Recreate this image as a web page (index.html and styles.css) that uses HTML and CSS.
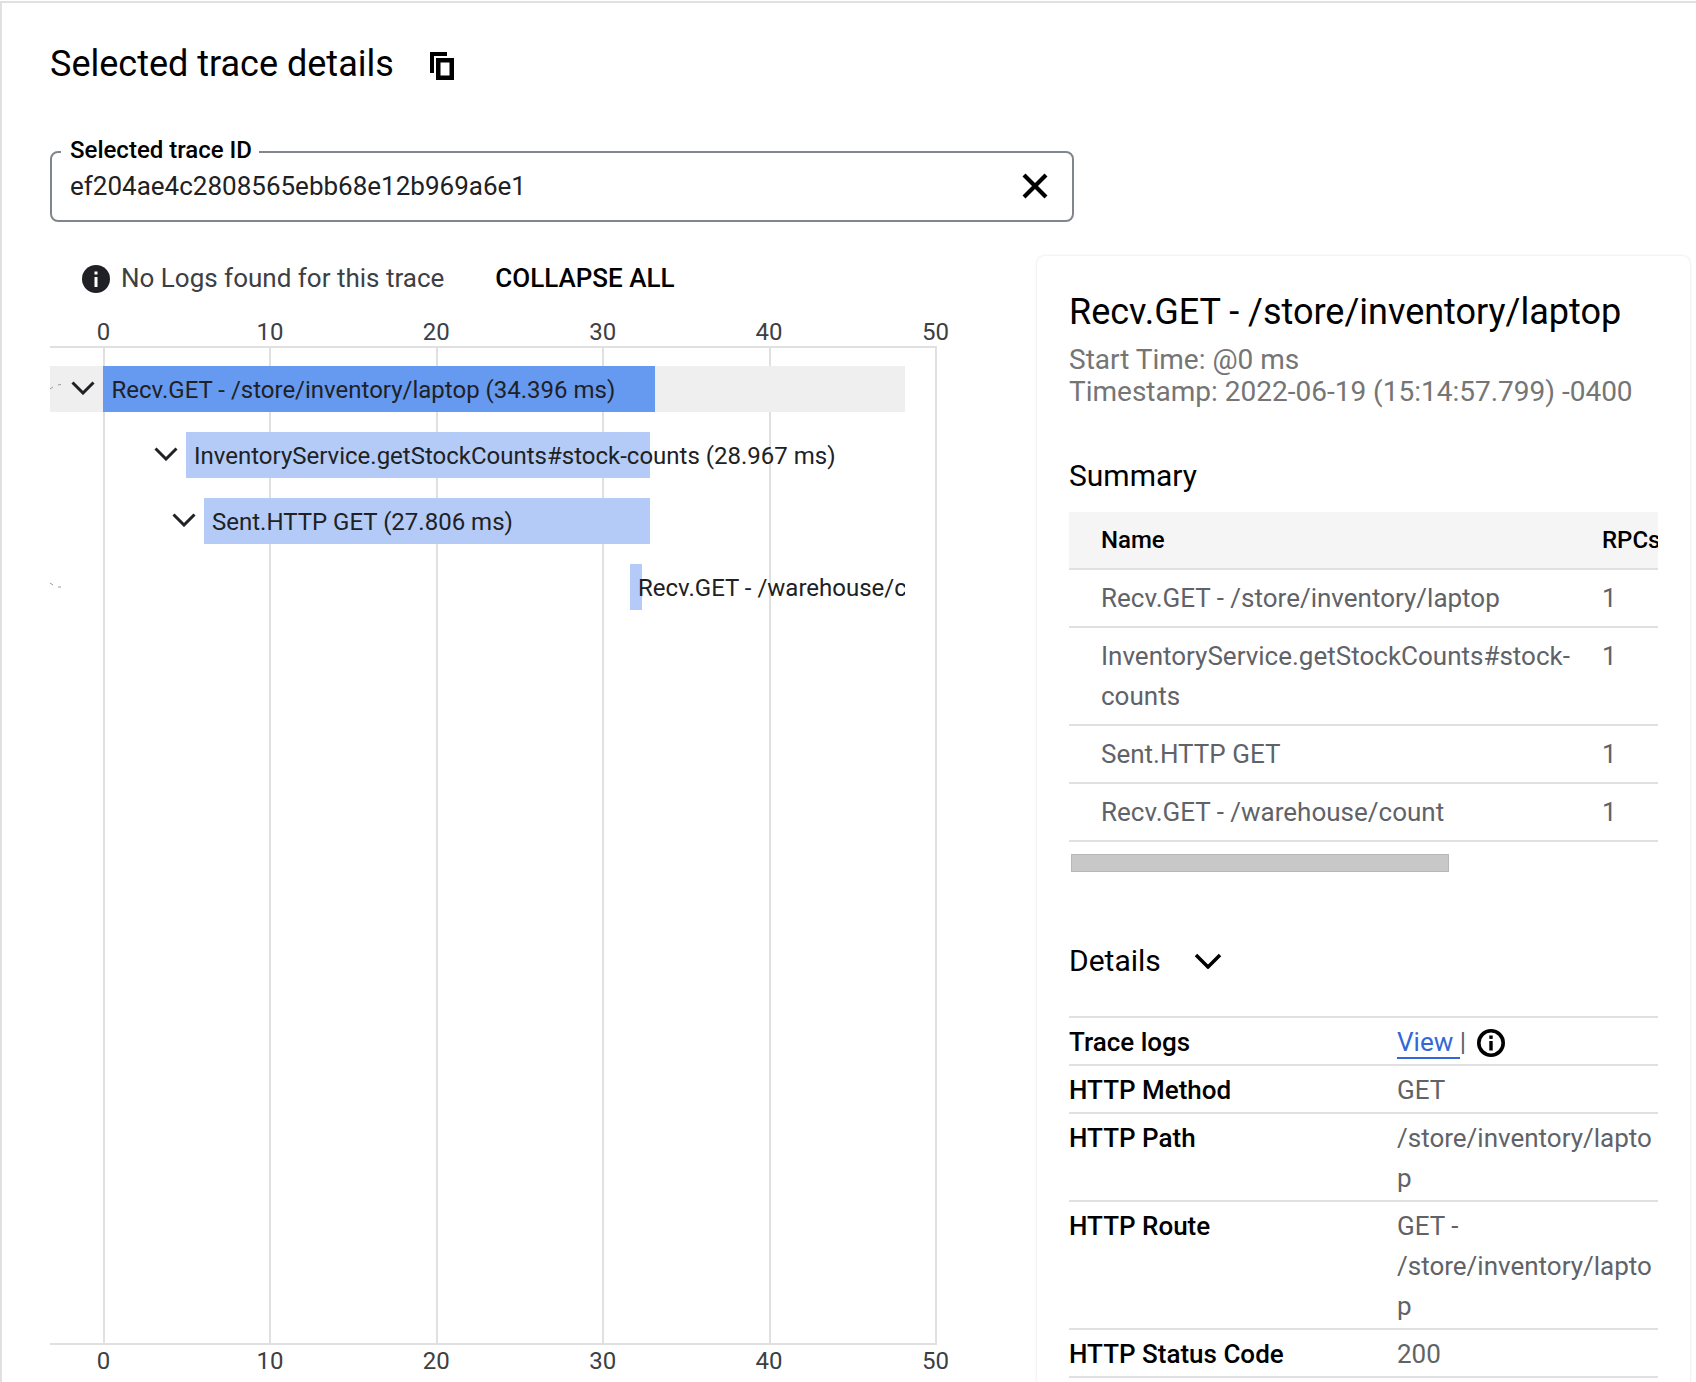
FILE: index.html
```html
<!DOCTYPE html>
<html lang="en">
<head>
    <meta charset="UTF-8">
    <title>Selected trace details</title>
    <link rel="stylesheet" href="styles.css">
</head>
<body>
    <div class="page">
        <div class="heading">
            <h2>Selected trace details</h2>
            <svg class="copy-icon" viewBox="0 0 24 28"><path d="M0 0h17v4H4v17H0z" fill="#000"/><path d="M6 6h18v22H6zM10.500 10.500v13h9v-13z" fill="#000" fill-rule="evenodd"/></svg>
        </div>

        <div class="trace-field">
            <span class="trace-label">Selected trace ID</span>
            <span class="trace-value">ef204ae4c2808565ebb68e12b969a6e1</span>
            <svg class="clear-icon" viewBox="0 0 26 26"><path d="M2 2l22 22M24 2L2 24" stroke="#000" stroke-width="4.200" fill="none"/></svg>
        </div>

        <div class="content">
            <div class="chart-side">
                <div class="toolbar">
                    <svg class="info-icon" viewBox="0 0 28 28"><circle cx="14" cy="14" r="14" fill="#202124"/><rect x="12.500" y="12" width="3" height="10" fill="#fff"/><rect x="12.500" y="6.500" width="3" height="3" fill="#fff"/></svg>
                    <span class="no-logs">No Logs found for this trace</span>
                    <span class="collapse-all">COLLAPSE ALL</span>
                </div>

                <div class="axis axis-top">
                    <span>0</span><span>10</span><span>20</span><span>30</span><span>40</span><span>50</span>
                </div>

                <div class="plot">
                    <div class="grid">
                        <i></i><i></i><i></i><i></i><i></i><i></i>
                    </div>
                    <div class="span-row selected">
                        <svg class="speck" viewBox="0 0 12 6"><path d="M0 5l3-2M8 1l3-.5" stroke="#999" stroke-width="1" fill="none"/></svg>
                        <div class="bar bar-root" style="left:53px;width:552px"></div>
                        <svg class="chevron" style="left:21px" viewBox="0 0 24 14"><path d="M1.500 1.500L12 12 22.500 1.500" /></svg>
                        <span class="span-label" style="left:61.500px">Recv.GET - /store/inventory/laptop (34.396 ms)</span>
                    </div>
                    <div class="span-row">
                        <div class="bar" style="left:136px;width:464px"></div>
                        <svg class="chevron" style="left:104px" viewBox="0 0 24 14"><path d="M1.500 1.500L12 12 22.500 1.500" /></svg>
                        <span class="span-label" style="left:144px">InventoryService.getStockCounts#stock-counts (28.967 ms)</span>
                    </div>
                    <div class="span-row">
                        <div class="bar" style="left:154px;width:446px"></div>
                        <svg class="chevron" style="left:122px" viewBox="0 0 24 14"><path d="M1.500 1.500L12 12 22.500 1.500" /></svg>
                        <span class="span-label" style="left:162px">Sent.HTTP GET (27.806 ms)</span>
                    </div>
                    <div class="span-row">
                        <svg class="speck" viewBox="0 0 12 6"><path d="M0 1l3 2M8 5h3" stroke="#999" stroke-width="1" fill="none"/></svg>
                        <div class="bar" style="left:580px;width:12px"></div>
                        <span class="span-label" style="left:588px">Recv.GET - /warehouse/count</span>
                    </div>
                </div>

                <div class="axis axis-bottom">
                    <span>0</span><span>10</span><span>20</span><span>30</span><span>40</span><span>50</span>
                </div>
            </div>

            <div class="card">
                <h3 class="span-title">Recv.GET - /store/inventory/laptop</h3>
                <p class="span-meta">Start Time: @0 ms<br>Timestamp: 2022-06-19 (15:14:57.799) -0400</p>

                <h4 class="summary-title">Summary</h4>
                <div class="summary-wrap">
                    <table class="summary">
                        <tr><th class="col-name">Name</th><th>RPCs</th></tr>
                        <tr><td class="col-name">Recv.GET - /store/inventory/laptop</td><td>1</td></tr>
                        <tr><td class="col-name">InventoryService.getStockCounts#stock-counts</td><td>1</td></tr>
                        <tr><td class="col-name">Sent.HTTP GET</td><td>1</td></tr>
                        <tr><td class="col-name">Recv.GET - /warehouse/count</td><td>1</td></tr>
                    </table>
                </div>
                <div class="scrollbar"></div>

                <div class="details-head">
                    <h4>Details</h4>
                    <svg class="details-chevron" viewBox="0 0 28 16"><path d="M2 2l12 12L26 2"/></svg>
                </div>

                <table class="details">
                    <tr>
                        <th>Trace logs</th>
                        <td><a class="view-link" href="#">View </a><span class="pipe">|</span>
                            <svg class="info-outline" viewBox="0 0 28 28"><circle cx="14" cy="14" r="12.200" fill="none" stroke="#000" stroke-width="3.600"/><rect x="12.300" y="12" width="3.400" height="9.500" fill="#000"/><rect x="12.300" y="6.500" width="3.400" height="3.400" fill="#000"/></svg>
                        </td>
                    </tr>
                    <tr><th>HTTP Method</th><td>GET</td></tr>
                    <tr><th>HTTP Path</th><td>/store/inventory/laptop</td></tr>
                    <tr><th>HTTP Route</th><td>GET - /store/inventory/laptop</td></tr>
                    <tr><th>HTTP Status Code</th><td>200</td></tr>
                </table>
            </div>
        </div>
    </div>
</body>
</html>
```

FILE: styles.css
```css
* {
    box-sizing: border-box;
}
body {
    margin: 0;
    background: #fff;
    font-family: Roboto, sans-serif;
    color: #202124;
}
.page {
    height: 1381px;
    overflow: hidden;
    margin-top: 1px;
    border-top: 2px solid #e0e0e0;
    border-left: 2px solid #e0e0e0;
    padding-left: 48px;
}

/* heading */
.heading {
    display: flex;
    align-items: center;
    height: 58px;
    margin-top: 32px;
}
.heading h2 {
    margin: 0;
    font-size: 36px;
    font-weight: 400;
    color: #000;
}
.copy-icon {
    width: 24px;
    height: 28px;
    margin-left: 36px;
    margin-top: 4px;
}

/* trace id field */
.trace-field {
    position: relative;
    display: flex;
    align-items: center;
    justify-content: space-between;
    width: 1024px;
    height: 71px;
    margin-top: 58px;
    padding: 0 24px 0 18px;
    border: 2px solid #80868b;
    border-radius: 8px;
}
.trace-label {
    position: absolute;
    left: 9px;
    top: -17px;
    padding: 0 7px 0 9px;
    background: #fff;
    font-size: 24px;
    line-height: 28px;
    font-weight: 500;
    color: #000;
}
.trace-value {
    font-size: 26px;
    margin-top: -2px;
    color: #202124;
}
.clear-icon {
    width: 26px;
    height: 26px;
    margin-top: -2px;
}

.content {
    display: flex;
    margin-top: 34px;
}

/* chart */
.chart-side {
    width: 987px;
    flex: none;
}
.toolbar {
    display: flex;
    align-items: center;
    height: 28px;
    margin-top: 8px;
    padding-left: 32px;
    font-size: 26px;
}
.info-icon {
    width: 28px;
    height: 28px;
    flex: none;
    margin-top: 2px;
}
.no-logs {
    margin-left: 11px;
    color: #3c4043;
}
.collapse-all {
    margin-left: 51px;
    font-weight: 500;
    color: #000;
}
.axis {
    display: flex;
    width: 998px;
    margin-left: -29.700px;
    font-size: 24px;
    line-height: 28px;
    color: #3c4043;
}
.axis span {
    flex: 0 0 166.400px;
    text-align: center;
}
.axis-top {
    margin-top: 26px;
    height: 28px;
}
.axis-bottom {
    padding-top: 2px;
    height: 32px;
}
.plot {
    position: relative;
    width: 887px;
    height: 999px;
    padding-top: 18px;
    border-top: 2px solid #e0e0e0;
    border-bottom: 2px solid #e0e0e0;
}
.grid {
    position: absolute;
    top: 0;
    bottom: 0;
    left: 53px;
    display: flex;
    gap: 164.400px;
}
.grid i {
    width: 2px;
    background: #e0e0e0;
}
.span-row {
    position: relative;
    height: 46px;
    width: 855px;
    margin-bottom: 20px;
    overflow: hidden;
}
.selected {
    background: #efefef;
}
.bar {
    position: absolute;
    top: 0;
    bottom: 0;
    background: #b3cbf6;
}
.bar-root {
    background: #669af0;
}
.span-label {
    position: absolute;
    top: 0;
    line-height: 48px;
    font-size: 24px;
    white-space: nowrap;
    color: #202124;
}
.chevron {
    position: absolute;
    top: 15px;
    width: 24px;
    height: 14px;
}
.chevron path {
    fill: none;
    stroke: #202124;
    stroke-width: 3;
}
.speck {
    position: absolute;
    left: 0;
    top: 18px;
    width: 12px;
    height: 6px;
}

/* detail card */
.card {
    flex: none;
    width: 653px;
    height: 1200px;
    padding: 34px 32px 0 32px;
    border-radius: 8px;
    box-shadow: 0 0 3px rgba(60, 64, 67, 0.16);
}
.span-title {
    margin: 0;
    font-size: 36px;
    line-height: 44px;
    font-weight: 400;
    color: #000;
}
.span-meta {
    margin: 10px 0 0;
    font-size: 28px;
    line-height: 32px;
    color: #757575;
}
.summary-title {
    margin: 48px 0 0;
    font-size: 30px;
    line-height: 40px;
    font-weight: 400;
    color: #000;
}
.summary-wrap {
    margin-top: 16px;
    overflow: hidden;
}
.summary {
    border-collapse: collapse;
    table-layout: fixed;
    width: 589px;
    font-size: 26px;
}
.summary th,
.summary td {
    padding: 0;
    text-align: left;
    border-bottom: 2px solid #e0e0e0;
    white-space: nowrap;
}
.summary th {
    height: 57px;
    background: #f5f5f5;
    font-weight: 500;
    font-size: 24px;
    color: #000;
}
.summary td {
    padding-top: 8px;
    padding-bottom: 8px;
    vertical-align: top;
    color: #5f6368;
    line-height: 40px;
}
.summary .col-name {
    width: 533px;
    padding-left: 32px;
    padding-right: 20px;
    white-space: normal;
}
.scrollbar {
    width: 378px;
    height: 18px;
    margin: 12px 0 0 2px;
    background: #c8c8c8;
    border: 1px solid #b8b8b8;
}
.details-head {
    display: flex;
    align-items: center;
    height: 40px;
    margin-top: 68px;
}
.details-head h4 {
    margin: 0;
    font-size: 30px;
    font-weight: 400;
    color: #000;
}
.details-chevron {
    width: 28px;
    height: 16px;
    margin-left: 33px;
    margin-top: 2px;
}
.details-chevron path {
    fill: none;
    stroke: #000;
    stroke-width: 3.500;
}
.details {
    border-collapse: collapse;
    table-layout: fixed;
    width: 589px;
    margin-top: 36px;
    font-size: 26px;
    border-top: 2px solid #e0e0e0;
}
.details th,
.details td {
    padding: 4px 0 2px;
    line-height: 40px;
    text-align: left;
    vertical-align: top;
    border-bottom: 2px solid #e0e0e0;
}
.details th {
    width: 328px;
    font-weight: 500;
    color: #000;
}
.details td {
    color: #5f6368;
    overflow-wrap: anywhere;
}
.view-link {
    color: #3367d6;
    text-decoration: none;
    border-bottom: 2px solid #3367d6;
    white-space: pre;
}
.pipe {
    color: #5f6368;
}
.info-outline {
    width: 28px;
    height: 28px;
    margin-left: 5px;
    vertical-align: -6px;
}
```
